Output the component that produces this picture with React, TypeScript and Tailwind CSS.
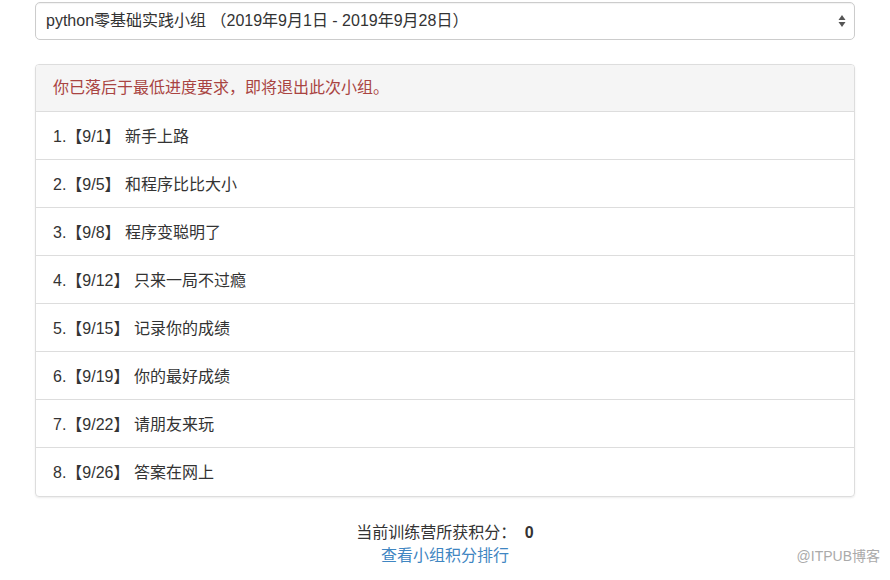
import React from 'react';

const lessons = [
  { n: 1, date: '9/1', title: '新手上路' },
  { n: 2, date: '9/5', title: '和程序比比大小' },
  { n: 3, date: '9/8', title: '程序变聪明了' },
  { n: 4, date: '9/12', title: '只来一局不过瘾' },
  { n: 5, date: '9/15', title: '记录你的成绩' },
  { n: 6, date: '9/19', title: '你的最好成绩' },
  { n: 7, date: '9/22', title: '请朋友来玩' },
  { n: 8, date: '9/26', title: '答案在网上' },
];

const App: React.FC = () => {
  return (
    <div
      className="relative min-h-[580px] w-[890px] bg-white text-[#333] overflow-hidden"
      style={{ fontFamily: '"Liberation Sans", "Noto Sans CJK SC", sans-serif' }}
    >
      <div className="px-[35px] pt-[2px]">
        {/* Group selector */}
        <div className="flex h-[38px] items-center justify-between rounded-[5px] border border-[#ccc] bg-white pl-[10px] pr-[8px] text-[16px] shadow-[inset_0_1px_1px_rgba(0,0,0,0.05)]">
          <span>python零基础实践小组 （2019年9月1日 - 2019年9月28日）</span>
          <svg width="8" height="14" viewBox="0 0 8 14" className="text-[#555]">
            <path d="M4 1 L7.5 6 H0.5 Z" fill="currentColor" />
            <path d="M4 13 L7.5 8 H0.5 Z" fill="currentColor" />
          </svg>
        </div>

        {/* Lesson panel */}
        <div className="mt-[24px] overflow-hidden rounded-[4px] border border-[#ddd] shadow-[0_1px_2px_rgba(0,0,0,0.08)]">
          <div className="flex h-[47px] items-center border-b border-[#ddd] bg-[#f5f5f5] px-[17px] text-[16px] text-[#a94442]">
            你已落后于最低进度要求，即将退出此次小组。
          </div>
          {lessons.map((l, i) => (
            <div
              key={l.n}
              className={
                'flex h-[48px] items-center px-[17px] pt-[2px] text-[16px] text-[#333] ' +
                (i < lessons.length - 1 ? 'border-b border-[#ddd]' : '')
              }
            >
              <span>
                {l.n}.【{l.date}】 {l.title}
              </span>
            </div>
          ))}
        </div>

        {/* Score */}
        <div className="mt-[24px] flex flex-col items-center text-[16px] leading-[23px]">
          <p>
            当前训练营所获积分： <span className="ml-[4px] font-bold">0</span>
          </p>
          <a href="#" className="text-[#3f86c2]">
            查看小组积分排行
          </a>
        </div>
      </div>

      {/* Watermark */}
      <div className="absolute right-[10px] top-[546px] text-[14px] text-[#aaa]">@ITPUB博客</div>
    </div>
  );
};

export default App;
